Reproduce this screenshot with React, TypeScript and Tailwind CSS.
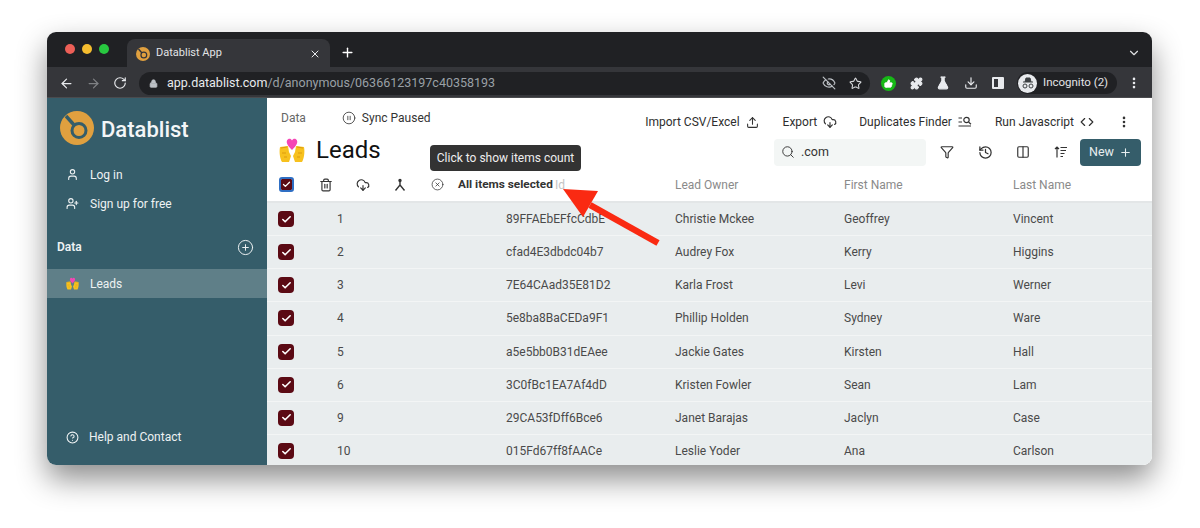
import React from "react";
import {
  ArrowLeft,
  ArrowRight,
  RotateCw,
  Lock,
  EyeOff,
  Star,
  Puzzle,
  FlaskConical,
  Download,
  EllipsisVertical,
  ChevronDown,
  X,
  Plus,
  User,
  UserPlus,
  CirclePlus,
  CircleHelp,
  CirclePause,
  Upload,
  CloudDownload,
  Code,
  Search,
  Funnel,
  History,
  Columns2,
  Trash2,
  CircleX,
  Check,
  ThumbsUp,
} from "lucide-react";

const rows = [
  { n: 1, id: "89FFAEbEFfcCdbE", owner: "Christie Mckee", first: "Geoffrey", last: "Vincent" },
  { n: 2, id: "cfad4E3dbdc04b7", owner: "Audrey Fox", first: "Kerry", last: "Higgins" },
  { n: 3, id: "7E64CAad35E81D2", owner: "Karla Frost", first: "Levi", last: "Werner" },
  { n: 4, id: "5e8ba8BaCEDa9F1", owner: "Phillip Holden", first: "Sydney", last: "Ware" },
  { n: 5, id: "a5e5bb0B31dEAee", owner: "Jackie Gates", first: "Kirsten", last: "Hall" },
  { n: 6, id: "3C0fBc1EA7Af4dD", owner: "Kristen Fowler", first: "Sean", last: "Lam" },
  { n: 9, id: "29CA53fDff6Bce6", owner: "Janet Barajas", first: "Jaclyn", last: "Case" },
  { n: 10, id: "015Fd67ff8fAACe", owner: "Leslie Yoder", first: "Ana", last: "Carlson" },
];

const Logo = ({ size, line }: { size: number; line: string }) => (
  <svg width={size} height={size} viewBox="0 0 34 34">
    <circle cx="17" cy="17" r="17" fill="#e0a03f" />
    <circle cx="19" cy="19.5" r="7" fill="none" stroke={line} strokeWidth="3" />
    <path d="M6 5 L14.5 14.5" stroke={line} strokeWidth="3.4" />
  </svg>
);

const Emoji = ({ size }: { size: number }) => (
  <svg width={size} height={size} viewBox="0 0 26 26">
    <path d="M1 10 L9 9 L10 15 L12 19 L10 25 L3 25 C1 22 0 15 1 10Z" fill="#f7c11e" />
    <path d="M25 10 L17 9 L16 15 L14 19 L16 25 L23 25 C25 22 26 15 25 10Z" fill="#f7c11e" />
    <path d="M2 11 L8 10 M3 16 L7 16 M5 20 L8 20 M18 10 L24 11 M19 16 L23 16 M18 20 L21 20" stroke="#d9960f" strokeWidth="0.9" />
    <path d="M13 13 C9 9 7 6 8 3.5 C9 1 12 1 13 3.5 C14 1 17 1 18 3.5 C19 6 17 9 13 13Z" fill="#f545b5" />
  </svg>
);

const Box = ({ big }: { big?: boolean }) => (
  <span
    className={`flex items-center justify-center bg-[#5b0a14] ${
      big
        ? "h-[16px] w-[16px] rounded-[4px]"
        : "h-[11px] w-[11px] rounded-[1px] outline-2 outline-offset-0 outline-[#2f6fc4]"
    }`}
  >
    <Check size={big ? 11 : 9} strokeWidth={3.5} className="text-white" />
  </span>
);

const MergeIcon = () => (
  <svg width="14" height="14" viewBox="0 0 14 14" fill="none" stroke="#333" strokeWidth="1.4">
    <path d="M7 2.5 V7 L2.5 12.5 M7 7 L11.5 12.5" />
    <circle cx="7" cy="2.5" r="1" fill="#333" />
  </svg>
);

const FindIcon = () => (
  <svg width="14" height="12" viewBox="0 0 14 12" fill="none" stroke="#333" strokeWidth="1.2">
    <path d="M0.5 2 H4 M0.5 6 H4 M0.5 10 H13" />
    <circle cx="8.5" cy="4" r="2.7" />
    <path d="M10.5 6 L13 8.2" />
  </svg>
);

const SortIcon = () => (
  <svg width="14" height="12" viewBox="0 0 14 12" fill="none" stroke="#333" strokeWidth="1.2">
    <path d="M3 11.5 V1 M1 3 L3 1 L5 3 M6.5 1.5 H13 M6.5 4.5 H12 M6.5 7.5 H10.5 M6.5 10.5 H9" />
  </svg>
);

const Tool = ({ label, icon, className }: { label: string; icon: React.ReactNode; className?: string }) => (
  <span className={`flex items-center gap-[6px] text-[12px] leading-none text-[#2e2e2e] ${className ?? ""}`}>
    {label}
    {icon}
  </span>
);

export default function App() {
  return (
    <div className="relative h-[528px] w-[1200px] overflow-hidden bg-white pl-[47px] pt-[32px] font-['Roboto',sans-serif]">
      <div className="flex h-[433px] w-[1105px] flex-col overflow-hidden rounded-[9px] shadow-[0_14px_30px_rgba(0,0,0,0.45)]">
        {/* tab strip */}
        <div className="flex h-[35px] shrink-0 items-end bg-[#202124]">
          <div className="ml-[18px] flex gap-[7px] self-center pb-[2px]">
            <span className="h-[10px] w-[10px] rounded-full bg-[#ed5f57]" />
            <span className="h-[10px] w-[10px] rounded-full bg-[#f5bd2f]" />
            <span className="h-[10px] w-[10px] rounded-full bg-[#28c840]" />
          </div>
          <div className="ml-[18px] flex h-[28px] w-[203px] items-center rounded-t-[8px] bg-[#35363a] pl-[9px] pr-[9px] pt-[1px]">
            <Logo size={14} line="#35363a" />
            <span className="ml-[6px] flex-1 text-[11px] text-[#e3e4e6]">Datablist App</span>
            <X size={12} strokeWidth={2} className="text-[#e8eaed]" />
          </div>
          <Plus size={15} strokeWidth={2.2} className="mb-[7px] ml-[10px] text-white" />
          <ChevronDown size={14} strokeWidth={2} className="mb-[7px] ml-auto mr-[11px] text-[#e0e1e3]" />
        </div>

        {/* address bar */}
        <div className="flex h-[31px] shrink-0 items-center border-b border-[#4a4b4e] bg-[#35363a] pl-[12px] pt-[2px]">
          <ArrowLeft size={15} className="text-[#e8eaed]" />
          <ArrowRight size={15} className="ml-[12px] text-[#7f8184]" />
          <RotateCw size={14} className="ml-[12px] text-[#e8eaed]" />
          <div className="ml-[12px] flex h-[23px] w-[731px] items-center rounded-full bg-[#202124] pl-[10px] pr-[8px]">
            <Lock size={9} fill="#bdc1c6" className="text-[#bdc1c6]" />
            <span className="ml-[9px] flex-1 text-[12.5px] text-[#e8eaed]">
              app.datablist.com<span className="text-[#9aa0a6]">/d/anonymous/06366123197c40358193</span>
            </span>
            <EyeOff size={14} className="text-[#bdc1c6]" />
            <Star size={13} className="ml-[13px] text-[#d5d7da]" />
          </div>
          <span className="ml-[11px] flex h-[15px] w-[15px] items-center justify-center rounded-full bg-[#16b816]">
            <ThumbsUp size={9} fill="white" className="text-white" />
          </span>
          <Puzzle size={13} fill="#e8eaed" className="ml-[14px] text-[#e8eaed]" />
          <FlaskConical size={14} fill="#e8eaed" className="ml-[13px] text-[#e8eaed]" />
          <Download size={14} className="ml-[14px] text-[#e8eaed]" />
          <span className="ml-[14px] flex h-[12px] w-[12px] rounded-[1px] border-2 border-[#e8eaed]">
            <span className="ml-auto h-full w-[4px] bg-[#e8eaed]" />
          </span>
          <div className="ml-[13px] flex h-[22px] w-[100px] shrink-0 items-center rounded-full bg-[#202124] pl-[1px]">
            <span className="flex h-[19px] w-[19px] items-center justify-center rounded-full bg-[#e8eaed]">
              <svg width="14" height="12" viewBox="0 0 14 12" fill="none" stroke="#3c4043" strokeWidth="1">
                <path d="M2 5 H12 M4 5 L5 1 H9 L10 5" fill="#3c4043" />
                <circle cx="4" cy="9" r="2" />
                <circle cx="10" cy="9" r="2" />
              </svg>
            </span>
            <span className="ml-[6px] text-[11.5px] text-[#e3e4e6]">Incognito (2)</span>
          </div>
          <EllipsisVertical size={14} strokeWidth={2.5} className="ml-[10px] shrink-0 text-[#e8eaed]" />
        </div>

        <div className="flex min-h-0 flex-1">
          {/* sidebar */}
          <aside className="flex w-[220px] shrink-0 flex-col bg-[#355d6a] text-[#eef2f3]">
            <div className="ml-[13px] mt-[13px] flex items-center gap-[7px]">
              <Logo size={34} line="#355d6a" />
              <span className="mt-[3px] text-[22px] font-medium leading-none text-[#f4f6f7]">Datablist</span>
            </div>
            <div className="ml-[19px] mt-[15px] flex h-[29px] items-center gap-[11px] text-[12px]">
              <User size={13} />
              Log in
            </div>
            <div className="ml-[19px] flex h-[29px] items-center gap-[11px] text-[12px]">
              <UserPlus size={13} />
              Sign up for free
            </div>
            <div className="mt-[20px] flex items-center justify-between pl-[10px] pr-[13px] text-[12px] font-semibold">
              Data
              <CirclePlus size={17} strokeWidth={1.4} />
            </div>
            <div className="mt-[13px] flex h-[29px] items-center bg-[#5f7f88] pl-[19px] text-[12px]">
              <Emoji size={13} />
              <span className="ml-[11px]">Leads</span>
            </div>
            <div className="ml-[19px] mt-auto mb-[19px] flex items-center gap-[10px] text-[12px]">
              <CircleHelp size={13} />
              Help and Contact
            </div>
          </aside>

          {/* main */}
          <main className="flex min-w-0 flex-1 flex-col bg-white">
            <div className="flex h-[105px] shrink-0 flex-col border-b-2 border-[#e3e6e7]">
              <div className="flex h-[40px] shrink-0 items-start pr-[21px] pt-[12px]">
                <span className="ml-[14px] text-[12px] leading-[16px] text-[#666]">Data</span>
                <span className="ml-[36px] flex items-center gap-[6px] text-[12px] leading-[16px] text-[#333]">
                  <CirclePause size={14} strokeWidth={1.4} />
                  Sync Paused
                </span>
                <div className="ml-auto mt-[5px] flex items-center">
                  <Tool label="Import CSV/Excel" icon={<Upload size={13} className="text-[#333]" />} />
                  <Tool label="Export" className="ml-[24px]" icon={<CloudDownload size={14} className="text-[#333]" />} />
                  <Tool label="Duplicates Finder" className="ml-[22px]" icon={<FindIcon />} />
                  <Tool label="Run Javascript" className="ml-[23px]" icon={<Code size={14} className="text-[#333]" />} />
                  <EllipsisVertical size={14} strokeWidth={2.5} className="ml-[23px] text-[#333]" />
                </div>
              </div>
              <div className="flex h-[28px] shrink-0 items-center pr-[11px]">
                <span className="ml-[12px] -mt-[4px]">
                  <Emoji size={26} />
                </span>
                <span className="ml-[11px] -mt-[4px] text-[24px] leading-none text-[#111]">Leads</span>
                <div className="ml-auto flex h-[27px] w-[152px] items-center gap-[6px] rounded-[4px] bg-[#f3f6f5] pl-[7px] text-[12.5px] text-[#333]">
                  <Search size={14} strokeWidth={1.6} />
                  .com
                </div>
                <Funnel size={14} className="ml-[14px] text-[#333]" />
                <History size={15} className="ml-[24px] text-[#333]" />
                <Columns2 size={14} className="ml-[23px] text-[#333]" />
                <span className="ml-[24px]">
                  <SortIcon />
                </span>
                <span className="ml-[12px] flex h-[27px] w-[61px] items-center justify-center gap-[5px] rounded-[4px] bg-[#355d6a] text-[12.5px] text-[#e8eef0]">
                  New
                  <Plus size={13} />
                </span>
              </div>
              <div className="flex flex-1 items-center pt-[2px] text-[12px] text-[#8a8a8a]">
                <span className="ml-[13px] flex w-[12px] justify-center">
                  <Box />
                </span>
                <Trash2 size={14} className="ml-[27px] text-[#333]" />
                <CloudDownload size={14} className="ml-[23px] text-[#333]" />
                <span className="ml-[23px] flex">
                  <MergeIcon />
                </span>
                <CircleX size={13} strokeWidth={1.4} className="ml-[24px] text-[#333]" />
                <span className="ml-[14px] w-[97px] text-[11.8px] font-bold text-[#333]">All items selected</span>
                <span className="w-[120px] text-[#c4c4c4]">Id</span>
                <span className="w-[169px]">Lead Owner</span>
                <span className="w-[169px]">First Name</span>
                <span>Last Name</span>
              </div>
            </div>
            {rows.map((r) => (
              <div
                key={r.n}
                className="flex h-[33.15px] shrink-0 items-center border-b border-[#f3f5f5] bg-[#e9edee] text-[12px] text-[#4a4a4a]"
              >
                <span className="ml-[11px] flex w-[16px] justify-center">
                  <Box big />
                </span>
                <span className="ml-[43px] w-[169px]">{r.n}</span>
                <span className="w-[169px]">{r.id}</span>
                <span className="w-[169px]">{r.owner}</span>
                <span className="w-[169px]">{r.first}</span>
                <span>{r.last}</span>
              </div>
            ))}
          </main>
        </div>
      </div>

      {/* tooltip */}
      <div className="absolute left-[430px] top-[145px] flex h-[26px] w-[151px] items-center justify-center rounded-[4px] bg-[#333333] text-[12px] text-[#eeeeee]">
        Click to show items count
      </div>

      {/* annotation arrow */}
      <svg className="absolute left-[560px] top-[180px]" width="110" height="75" viewBox="0 0 110 75">
        <path d="M98 63 L30 25" stroke="#fa2a12" strokeWidth="6.5" />
        <path d="M3 9 L38 11 L23 37 Z" fill="#fa2a12" />
      </svg>
    </div>
  );
}
